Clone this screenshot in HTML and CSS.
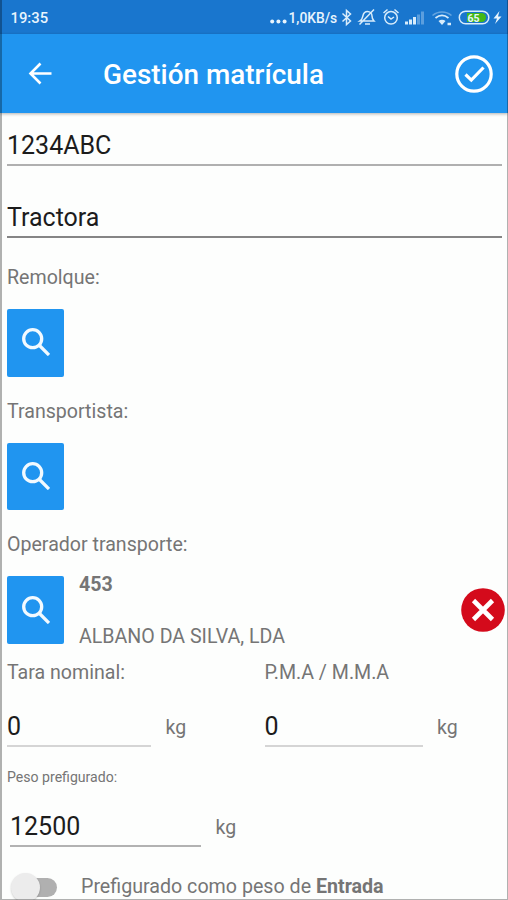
FILE: index.html
```
<!DOCTYPE html>
<html lang="es">
<head>
<meta charset="UTF-8">
<meta name="viewport" content="width=device-width, initial-scale=1.0">
<title>Gestión matrícula</title>
<link rel="stylesheet" href="styles.css">
</head>
<body>

<div class="pantalla">

<div class="estado">
    <span class="hora">19:35</span>
    <svg class="iconos-izq" width="17" height="34" viewBox="0 0 17 34" fill="#e8f4fd">
        <circle cx="2.2" cy="21.5" r="2"/><circle cx="8.4" cy="21.5" r="2"/><circle cx="14.6" cy="21.5" r="2"/>
    </svg>
    <span class="velocidad">1,0KB/s</span>
    <svg class="iconos-der" width="168" height="34" viewBox="340 0 168 34" fill="none" stroke="#d8ecfb" stroke-width="1.5">
        <!-- bluetooth -->
        <path d="M342.500 13.500l8 7.500-4 3.500v-14l4 3.500-8 7.500"/>
        <!-- silencio -->
        <path d="M360 21c2.500-1.500 2.500-3.500 3-5.500.6-2.500 2.500-4 4.500-4 2.500 0 4.500 2 4.500 4.500 0 2 .5 3.500 2 5zM365 24h5M359.500 24.500l14.500-15"/>
        <!-- alarma -->
        <circle cx="391" cy="17.800" r="6.300"/>
        <path d="M388 16.500l3 2.500 3-2M383.500 13l4-3.500M398.500 13l-4-3.500"/>
        <!-- cobertura -->
        <g stroke="none" fill="#d8ecfb">
            <path d="M405 21.500h3v3h-3zM409 19.500h3v5h-3zM413 17h3v7.500h-3z"/>
            <path d="M417 14.500h3v10h-3zM421 11.500h3v13h-3z" opacity=".35"/>
        </g>
        <!-- wifi -->
        <path d="M432.500 15.500c5.500-4.700 13.500-4.700 19 0" opacity=".4"/>
        <path d="M435.500 18c4-3.300 9-3.300 13 0" stroke-width="1.700"/>
        <path d="M438.500 21c2-1.700 5-1.700 7 0l-3.500 4z" fill="#d8ecfb" stroke="none"/>
        <path d="M447.500 24h3.500" stroke-width="2.500"/>
        <!-- bateria -->
        <rect x="459.300" y="11.200" width="29.500" height="12.600" rx="6.300"/>
        <path d="M467 13h14.500a4.500 4.500 0 0 1 0 9H467z" fill="#42b817" stroke="none"/>
        <text class="carga" x="467.500" y="21.500">65</text>
        <path d="M499.500 11l-6 7.500h3.500l-2 5.500 6.500-7.500h-3.500z" fill="#e8f4fd" stroke="none"/>
    </svg>
</div>

<header class="cabecera">
    <button class="btn-volver" aria-label="Volver">
        <svg width="24" height="24" viewBox="0 0 24 24" fill="none" stroke="#fff" stroke-width="2.600">
            <path d="M23.500 11.500H2.500M12.500 1.500L2.500 11.500l10 10"/>
        </svg>
    </button>
    <h1>Gestión matrícula</h1>
    <button class="btn-aceptar" aria-label="Aceptar">
        <svg width="38" height="38" viewBox="0 0 38 38" fill="none" stroke="#fff" stroke-width="3.200">
            <circle cx="19" cy="19" r="17.200"/>
            <path d="M10.500 19.500l5.800 5.600L28.500 12.500"/>
        </svg>
    </button>
</header>

<main class="formulario">
    <input class="campo" type="text" value="1234ABC">
    <input class="campo campo-tipo" type="text" value="Tractora">

    <p class="etiqueta">Remolque:</p>
    <button class="btn-buscar" aria-label="Buscar remolque">
        <svg width="28" height="28" viewBox="0 0 28 28" fill="none" stroke="#f2faff" stroke-width="3.300"><circle cx="10.700" cy="10.700" r="9"/><path d="M17 17l10 10"/></svg>
    </button>

    <p class="etiqueta">Transportista:</p>
    <button class="btn-buscar" aria-label="Buscar transportista">
        <svg width="28" height="28" viewBox="0 0 28 28" fill="none" stroke="#f2faff" stroke-width="3.300"><circle cx="10.700" cy="10.700" r="9"/><path d="M17 17l10 10"/></svg>
    </button>

    <p class="etiqueta">Operador transporte:</p>
    <div class="operador">
        <button class="btn-buscar" aria-label="Buscar operador">
            <svg width="28" height="28" viewBox="0 0 28 28" fill="none" stroke="#f2faff" stroke-width="3.300"><circle cx="10.700" cy="10.700" r="9"/><path d="M17 17l10 10"/></svg>
        </button>
        <div class="operador-datos">
            <b>453</b>
            <span>ALBANO DA SILVA, LDA</span>
        </div>
        <button class="btn-borrar" aria-label="Borrar operador">
            <svg width="44" height="44" viewBox="0 0 44 44">
                <circle cx="22" cy="22" r="21.800" fill="#d40a1b"/>
                <path d="M12.500 12.500l19 19M31.500 12.500l-19 19" stroke="#fff" stroke-width="4.600"/>
            </svg>
        </button>
    </div>

    <div class="pesos">
        <div class="peso">
            <p>Tara nominal:</p>
            <div class="linea"><input class="tara" type="text" value="0"><span>kg</span></div>
        </div>
        <div class="peso">
            <p>P.M.A / M.M.A</p>
            <div class="linea"><input class="pma" type="text" value="0"><span>kg</span></div>
        </div>
    </div>

    <p class="etiqueta-peq">Peso prefigurado:</p>
    <div class="linea linea-pref"><input class="prefigurado" type="text" value="12500"><span>kg</span></div>

    <div class="opcion">
        <span class="interruptor"></span>
        <span>Prefigurado como peso de <b>Entrada</b></span>
    </div>
</main>

</div>

</body>
</html>
```
FILE: styles.css
```
:root {
    --primary: #2095f0;
    --primary-dark: #1976ce;
    --text: #1c1c1c;
    --gris: #757575;
}
* {
    box-sizing: border-box;
}
body {
    margin: 0;
    background: #fdfefd;
    font-family: Roboto, "Liberation Sans", sans-serif;
    color: var(--gris);
}
p {
    margin: 0;
}
button {
    border: none;
    padding: 0;
    background: transparent;
    cursor: pointer;
}
svg {
    display: block;
    flex: none;
}
.pantalla {
    position: relative;
    width: 508px;
    height: 900px;
    overflow: hidden;
}
/* marco de la pantalla */
.pantalla::after {
    content: "";
    position: absolute;
    inset: 0;
    border: solid rgba(0, 0, 0, 0.3);
    border-width: 0 1px 1px 2px;
    pointer-events: none;
}
.estado {
    display: flex;
    height: 34px;
    padding-left: 10.5px;
    background: var(--primary-dark);
    color: #e8f4fd;
    line-height: 36px;
}
.hora {
    flex: 1;
    font-size: 14.8px;
    font-weight: 500;
}
.velocidad {
    width: 53px;
    padding-left: 1.5px;
    font-size: 13.8px;
    font-weight: 500;
    white-space: nowrap;
}
.carga {
    font-size: 10.5px;
    font-weight: 700;
    fill: #e8f4fd;
    stroke: none;
}
.cabecera {
    display: flex;
    align-items: center;
    height: 79px;
    padding: 0 15px 0 28px;
    background: var(--primary);
    box-shadow: 0 1px 3px rgba(0, 0, 0, 0.3);
}
h1 {
    flex: 1;
    margin: 2px 0 0 51px;
    color: #fff;
    font-size: 27.9px;
    font-weight: 500;
    line-height: 32px;
}
.formulario {
    padding: 13px 6px 0 7px;
}
input {
    display: block;
    height: 40px;
    padding: 0;
    border: none;
    border-bottom: 2px solid #d5d5d5;
    border-radius: 0;
    outline: none;
    background: transparent;
    color: var(--text);
    font-family: inherit;
    font-size: 25px;
}
.campo {
    width: 100%;
    border-color: #b0b0b0;
}
.campo-tipo {
    margin-top: 32px;
    border-color: #858585;
}
.etiqueta {
    height: 71px;
    padding-top: 28px;
    font-size: 19.6px;
    line-height: 24px;
}
.btn-buscar + .etiqueta {
    height: 66px;
    padding-top: 23px;
}
.btn-buscar {
    display: flex;
    flex: none;
    align-items: center;
    justify-content: center;
    width: 57px;
    height: 67.5px;
    padding-bottom: 1px;
    border-radius: 2px;
    background: var(--primary);
}
.operador {
    display: flex;
    align-items: center;
    height: 68px;
    margin-right: -3px;
    font-size: 19.6px;
}
.operador-datos {
    display: flex;
    flex: 1;
    flex-direction: column;
    justify-content: space-between;
    height: 76px;
    margin: 2px 0 0 15px;
    line-height: 24px;
}
.pesos {
    display: grid;
    grid-template-columns: 257.5px 1fr;
    padding-top: 17px;
    font-size: 19.6px;
}
.peso p {
    line-height: 24px;
}
.linea {
    display: flex;
    align-items: center;
    gap: 14.5px;
    font-size: 19.5px;
}
.peso .linea {
    margin-top: 22px;
}
.tara {
    width: 144px;
}
.pma {
    width: 158px;
}
.etiqueta-peq {
    margin-top: 20px;
    font-size: 14.1px;
    line-height: 20px;
}
.linea-pref {
    margin: 20px 0 0 3px;
}
.prefigurado {
    width: 191px;
    border-color: #b2b2b2;
}
.opcion {
    display: flex;
    align-items: center;
    gap: 24px;
    margin-top: 25px;
    padding-left: 8px;
    font-size: 19.65px;
    line-height: 30px;
}
.interruptor {
    position: relative;
    width: 42px;
    height: 19px;
    border-radius: 10px;
    background: #b0b0b0;
}
.interruptor::before {
    content: "";
    position: absolute;
    top: -5px;
    left: -4px;
    width: 29px;
    height: 29px;
    border-radius: 50%;
    background: #ececec;
    box-shadow: 0 1px 2px rgba(0, 0, 0, 0.2);
}
```
